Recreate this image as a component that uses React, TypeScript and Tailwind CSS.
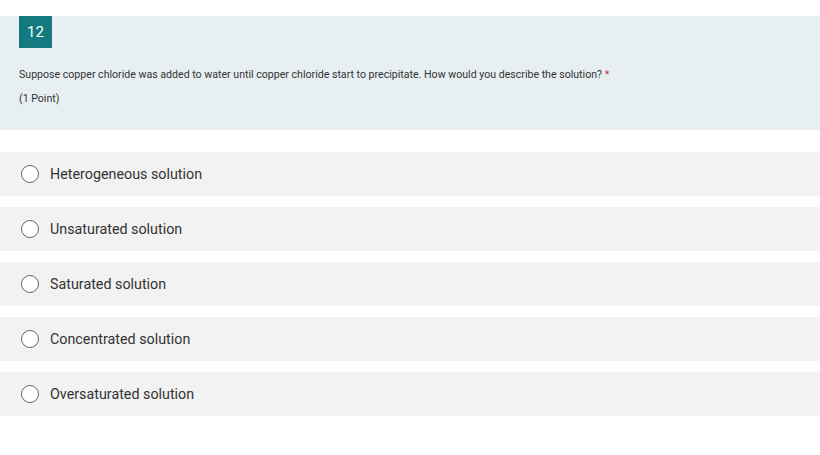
import React from 'react';

const options = [
  'Heterogeneous solution',
  'Unsaturated solution',
  'Saturated solution',
  'Concentrated solution',
  'Oversaturated solution',
];

export default function App() {
  return (
    <main className="min-h-screen w-[820px] bg-white pt-4 font-['Roboto',sans-serif]">
      {/* Question header */}
      <section className="h-[114px] bg-[#e8eff2] pl-[19px]">
        <div className="flex h-8 w-[33px] items-center justify-center bg-[#137b80] text-[15px] text-white">12</div>
        <p className="mt-[21px] text-[10.6px] leading-[12px] text-[#333]">
          Suppose copper chloride was added to water until copper chloride start to precipitate. How would you describe the solution?{' '}
          <span className="text-[#c4314b]">*</span>
        </p>
        <p className="mt-[12px] text-[10.6px] leading-[12px] text-[#333]">(1 Point)</p>
      </section>

      {/* Options */}
      <div className="mt-[22px] flex flex-col gap-[11px]">
        {options.map((opt) => (
          <label key={opt} className="flex h-[44px] items-center bg-[#f2f2f2] pl-[21px]">
            <span className="h-[18px] w-[18px] rounded-full border border-[#666] bg-white" />
            <span className="ml-[11px] pt-[2px] text-[14.3px] text-[#333]">{opt}</span>
          </label>
        ))}
      </div>
    </main>
  );
}
